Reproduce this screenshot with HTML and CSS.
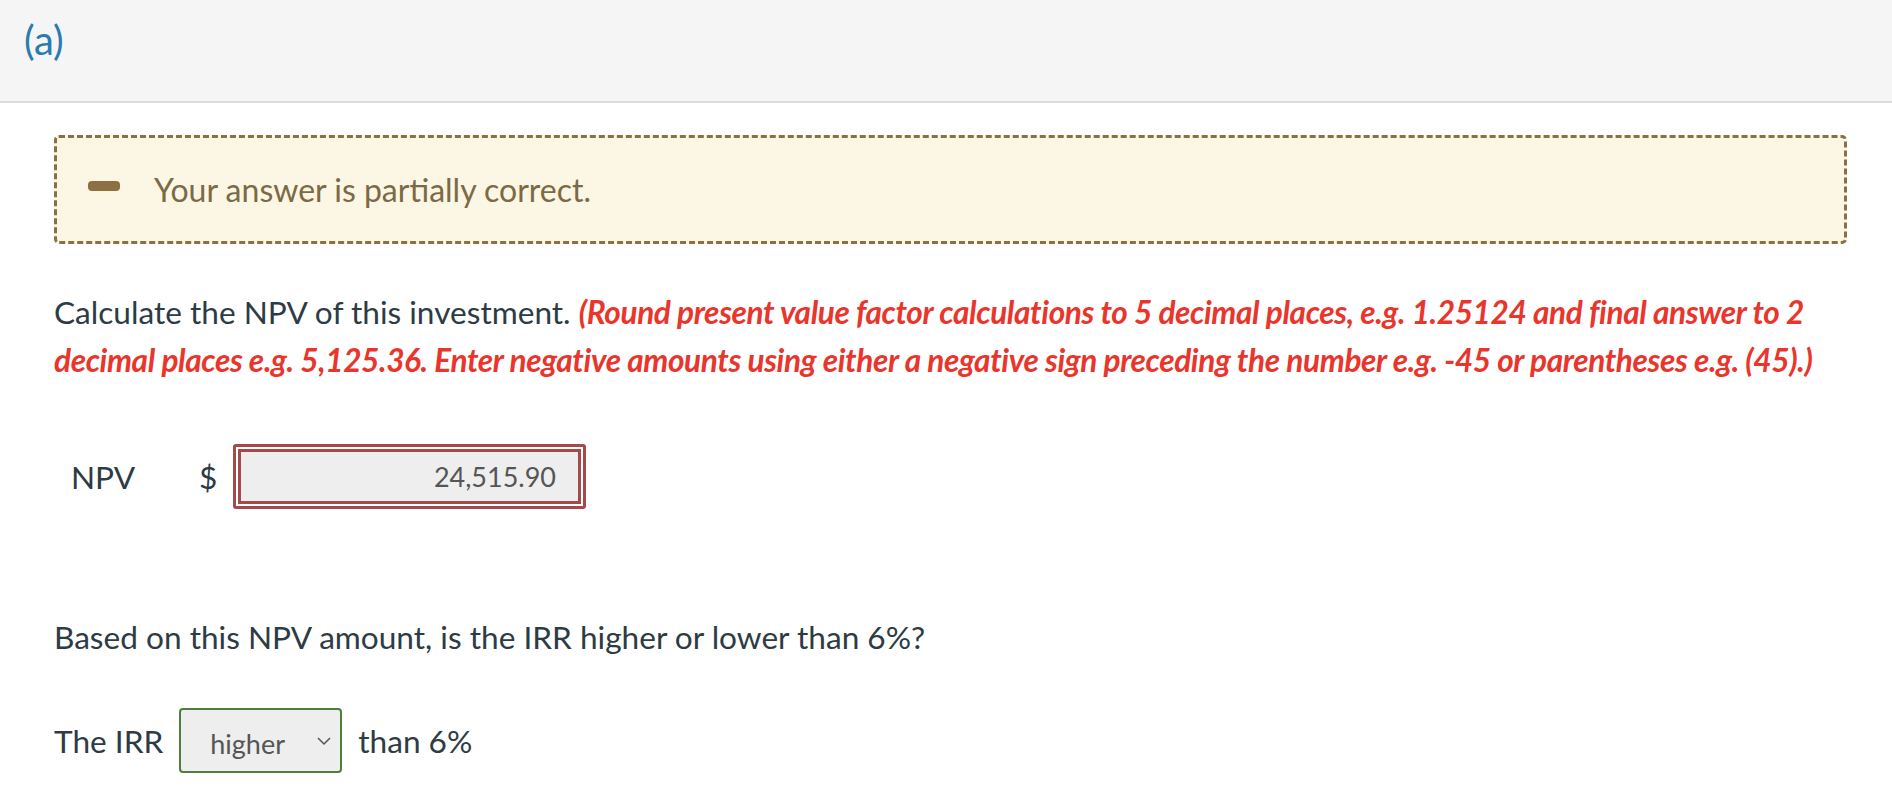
FILE: index.html
```html
<!DOCTYPE html>
<html lang="en">
<head>
<meta charset="utf-8">
<title>Question (a)</title>
<link rel="stylesheet" href="styles.css">
</head>
<body>
<header class="part-header">
  <h2 class="part-label">(a)</h2>
</header>
<main class="part-body">
  <div class="feedback">
    <span class="feedback-icon"></span>
    <span class="feedback-text">Your answer is partially correct.</span>
  </div>
  <p class="question">Calculate the NPV of this investment. <em class="hint">(Round present value factor calculations to 5 decimal places, e.g. 1.25124 and final answer to 2 decimal places e.g. 5,125.36. Enter negative amounts using either a negative sign preceding the number e.g. -45 or parentheses e.g. (45).)</em></p>
  <div class="answer-row npv-row">
    <span class="label npv-label">NPV</span>
    <span class="currency">$</span>
    <span class="input-wrap"><span class="input-box">24,515.90</span></span>
  </div>
  <p class="question question-irr">Based on this NPV amount, is the IRR higher or lower than 6%?</p>
  <div class="answer-row irr-row">
    <span class="label">The IRR</span>
    <span class="select-box">
      <span class="select-value">higher</span>
      <svg class="chevron" width="16" height="10" viewBox="0 0 16 10"><polyline points="2,2 8,8 14,2" fill="none" stroke="#555" stroke-width="1.5"/></svg>
    </span>
    <span class="label">than 6%</span>
  </div>
</main>
</body>
</html>
```
FILE: styles.css
```css
html, body {
  margin: 0;
  padding: 0;
  background: #ffffff;
}
body {
  font-family: Lato, "Open Sans", sans-serif;
  color: #2d3b45;
  width: 1892px;
}
.part-header {
  background: #f5f5f5;
  border-bottom: 2px solid #dcdcdc;
  height: 101px;
  display: flex;
  align-items: flex-start;
  padding-left: 24px;
}
.part-label {
  margin: 0;
  padding-top: 16px;
  font-weight: 400;
  font-size: 40px;
  line-height: 48px;
  color: #2b7bb0;
}
.part-body {
  padding: 32px 45px 0 54px;
}
.feedback {
  display: flex;
  align-items: center;
  height: 103px;
  box-sizing: content-box;
  border: 3px dashed #8a7042;
  border-radius: 5px;
  background: #fcf6e4;
  padding-left: 31px;
  gap: 34px;
}
.feedback-icon {
  display: block;
  width: 32px;
  height: 10px;
  border-radius: 4px;
  background: #8a7042;
  margin-top: -8px;
}
.feedback-text {
  font-size: 32px;
  color: #7b6a45;
}
.question {
  margin: 44px 0 0 0;
  font-size: 31.6px;
  line-height: 48px;
  color: #2d3b45;
}
.hint {
  font-style: italic;
  font-weight: 700;
  letter-spacing: -0.38px;
  color: #e9352b;
}
.answer-row {
  display: flex;
  align-items: center;
}
.npv-row {
  margin-top: 60px;
}
.label {
  font-size: 31.6px;
}
.npv-label {
  box-sizing: border-box;
  width: 145px;
  padding-left: 17px;
}
.currency {
  font-size: 31.6px;
  width: 34px;
}
.input-wrap {
  display: block;
  border: 3px solid #a54a4a;
  border-radius: 3px;
  padding: 2px;
  background: #fff;
}
.input-box {
  display: flex;
  align-items: center;
  justify-content: flex-end;
  box-sizing: border-box;
  width: 343px;
  height: 55px;
  border: 3px solid #a54a4a;
  background: #eeeeee;
  padding-right: 22px;
  font-size: 27px;
  color: #555;
}
.question-irr {
  margin-top: 104px;
}
.irr-row {
  margin-top: 47px;
  gap: 16px;
}
.select-box {
  display: flex;
  align-items: center;
  box-sizing: border-box;
  width: 163px;
  height: 65px;
  border: 2px solid #4f7d3c;
  border-radius: 4px;
  background: #eeeeee;
  padding: 0 8px 0 29px;
}
.select-value {
  font-size: 27px;
  color: #555;
  flex: 1;
  padding-top: 6px;
}
.chevron {
  display: block;
}
```
